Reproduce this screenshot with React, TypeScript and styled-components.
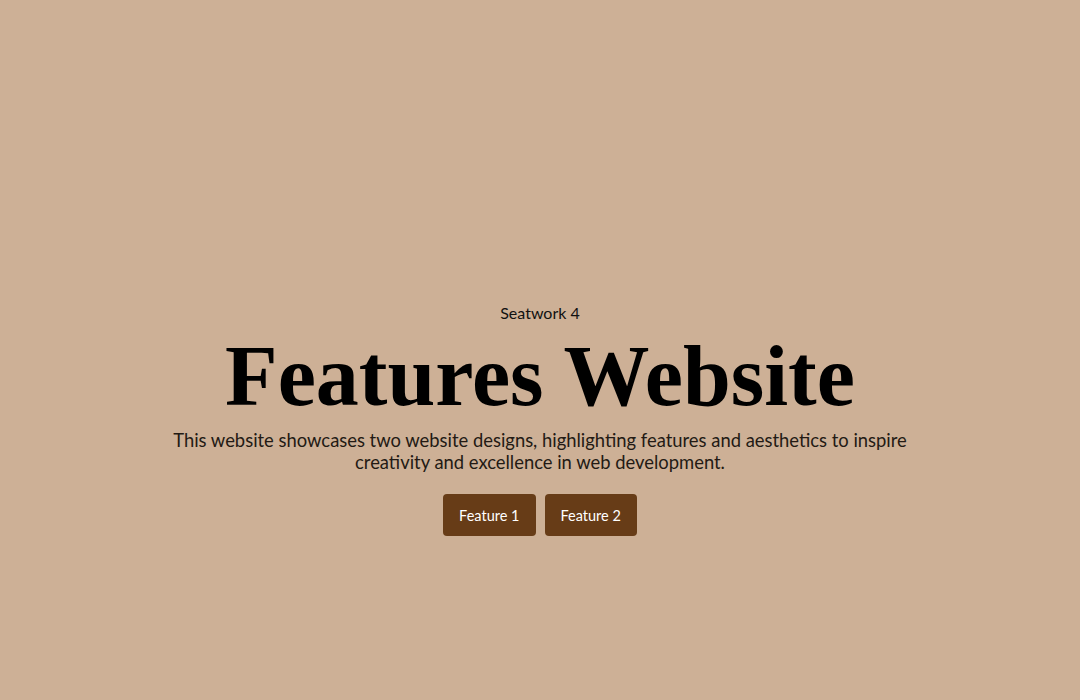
import React from "react";
import styled, { createGlobalStyle } from "styled-components";

const Global = createGlobalStyle`
  html, body { margin: 0; padding: 0; }
  body {
    background: #cdb096;
    font-family: "Lato", "Open Sans", sans-serif;
    color: #1c1410;
  }
`;

const Page = styled.main`
  min-height: 700px;
  display: flex;
  flex-direction: column;
  align-items: center;
  padding-top: 302px;
  box-sizing: border-box;
  text-align: center;
`;

const Eyebrow = styled.p`
  margin: 0;
  font-size: 16px;
  line-height: 22px;
  color: #111;
`;

const Title = styled.h1`
  margin: 9px 0 10px;
  font-family: "Liberation Serif", "Times New Roman", serif;
  font-weight: 700;
  font-size: 86px;
  line-height: 86px;
  color: #000;
`;

const Lead = styled.p`
  margin: 0;
  max-width: 760px;
  font-size: 18.4px;
  line-height: 22px;
  color: #231a14;
`;

const Actions = styled.div`
  display: flex;
  gap: 9px;
  margin-top: 21px;
`;

const Button = styled.a`
  display: inline-flex;
  align-items: center;
  justify-content: center;
  height: 42px;
  padding: 0 16px;
  background: #673c17;
  color: #fff;
  border-radius: 4px;
  font-size: 14.5px;
  text-decoration: none;
`;

export default function App() {
  return (
    <>
      <Global />
      <Page>
        <Eyebrow>Seatwork 4</Eyebrow>
        <Title>Features Website</Title>
        <Lead>
          This website showcases two website designs, highlighting features and
          aesthetics to inspire creativity and excellence in web development.
        </Lead>
        <Actions>
          <Button href="#">Feature 1</Button>
          <Button href="#">Feature 2</Button>
        </Actions>
      </Page>
    </>
  );
}
